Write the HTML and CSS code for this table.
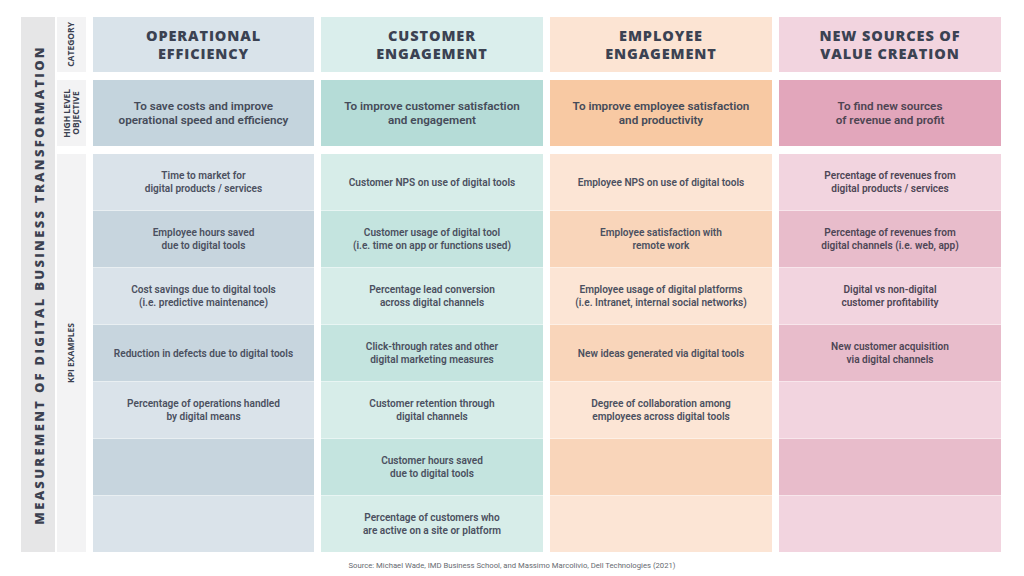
FILE: index.html
```html
<!DOCTYPE html>
<html>
<head>
<meta charset="utf-8">
<link rel="stylesheet" href="styles.css">
</head>
<body>
<div class="page">
  <div class="board">
    <div class="side"><span class="side-text">MEASUREMENT OF DIGITAL BUSINESS TRANSFORMATION</span></div>
    <div class="grid">
      <div class="lbl lbl-cat"><span class="vt">CATEGORY</span></div>
      <div class="cat c1"><h2>OPERATIONAL<br>EFFICIENCY</h2></div>
      <div class="cat c2"><h2>CUSTOMER<br>ENGAGEMENT</h2></div>
      <div class="cat c3"><h2>EMPLOYEE<br>ENGAGEMENT</h2></div>
      <div class="cat c4"><h2>NEW SOURCES OF<br>VALUE CREATION</h2></div>

      <div class="lbl lbl-obj"><span class="vt">HIGH LEVEL<br>OBJECTIVE</span></div>
      <div class="obj c1">To save costs and improve<br>operational speed and efficiency</div>
      <div class="obj c2">To improve customer satisfaction<br>and engagement</div>
      <div class="obj c3">To improve employee satisfaction<br>and productivity</div>
      <div class="obj c4">To find new sources<br>of revenue and profit</div>

      <div class="lbl lbl-kpi"><span class="vt">KPI EXAMPLES</span></div>
      <div class="kpis c1">
        <div class="kpi">Time to market for<br>digital products / services</div>
        <div class="kpi">Employee hours saved<br>due to digital tools</div>
        <div class="kpi">Cost savings due to digital tools<br>(i.e. predictive maintenance)</div>
        <div class="kpi">Reduction in defects due to digital tools</div>
        <div class="kpi">Percentage of operations handled<br>by digital means</div>
        <div class="kpi"></div>
        <div class="kpi"></div>
      </div>
      <div class="kpis c2">
        <div class="kpi">Customer NPS on use of digital tools</div>
        <div class="kpi">Customer usage of digital tool<br>(i.e. time on app or functions used)</div>
        <div class="kpi">Percentage lead conversion<br>across digital channels</div>
        <div class="kpi">Click-through rates and other<br>digital marketing measures</div>
        <div class="kpi">Customer retention through<br>digital channels</div>
        <div class="kpi">Customer hours saved<br>due to digital tools</div>
        <div class="kpi">Percentage of customers who<br>are active on a site or platform</div>
      </div>
      <div class="kpis c3">
        <div class="kpi">Employee NPS on use of digital tools</div>
        <div class="kpi">Employee satisfaction with<br>remote work</div>
        <div class="kpi">Employee usage of digital platforms<br>(i.e. Intranet, internal social networks)</div>
        <div class="kpi">New ideas generated via digital tools</div>
        <div class="kpi">Degree of collaboration among<br>employees across digital tools</div>
        <div class="kpi"></div>
        <div class="kpi"></div>
      </div>
      <div class="kpis c4">
        <div class="kpi">Percentage of revenues from<br>digital products / services</div>
        <div class="kpi">Percentage of revenues from<br>digital channels (i.e. web, app)</div>
        <div class="kpi">Digital vs non-digital<br>customer profitability</div>
        <div class="kpi">New customer acquisition<br>via digital channels</div>
        <div class="kpi"></div>
        <div class="kpi"></div>
        <div class="kpi"></div>
      </div>
    </div>
  </div>
  <p class="source">Source: Michael Wade, IMD Business School, and Massimo Marcolivio, Dell Technologies (2021)</p>
</div>
</body>
</html>
```

FILE: styles.css
```css
html, body {
  margin: 0;
  padding: 0;
  background: #ffffff;
}

.page {
  width: 1024px;
  height: 576px;
  padding: 17px 0 0 21px;
  box-sizing: border-box;
  font-family: Roboto, "Liberation Sans", sans-serif;
}

.board {
  display: flex;
  gap: 2px;
  height: 535px;
}

.side {
  width: 34px;
  background: #e6e6e7;
  display: flex;
  align-items: center;
  justify-content: center;
}

.side-text,
.vt {
  writing-mode: vertical-rl;
  transform: rotate(180deg);
  white-space: nowrap;
}

.side-text {
  font-family: "Open Sans", sans-serif;
  font-weight: 800;
  font-size: 13px;
  letter-spacing: 2.3px;
  color: #3b4150;
  margin-left: 2px;
}

.grid {
  display: grid;
  grid-template-columns: 29px 221px 222px 222px 222px;
  grid-template-rows: 55px 66px 398px;
  column-gap: 7px;
  row-gap: 8px;
}

.lbl {
  background: #f3f3f4;
  display: flex;
  align-items: center;
  justify-content: center;
}

.vt {
  font-family: "Open Sans", sans-serif;
  font-weight: 700;
  font-size: 8.5px;
  line-height: 8.5px;
  color: #3b4150;
  text-align: center;
}

.cat {
  display: flex;
  align-items: center;
  justify-content: center;
}

.cat h2 {
  margin: 0;
  font-family: "Open Sans", sans-serif;
  font-weight: 800;
  font-size: 14.5px;
  line-height: 18px;
  letter-spacing: 0.9px;
  text-align: center;
  color: #3b4252;
}

.obj {
  display: flex;
  align-items: center;
  justify-content: center;
  text-align: center;
  font-weight: 600;
  font-size: 11.7px;
  line-height: 14px;
  color: #454b59;
}

.kpis {
  display: grid;
  grid-template-rows: repeat(7, 1fr);
  row-gap: 1px;
}

.kpi {
  display: flex;
  align-items: center;
  justify-content: center;
  text-align: center;
  font-weight: 600;
  font-size: 10.1px;
  line-height: 13px;
  color: #4b5060;
}

/* Operational efficiency */
.cat.c1 { background: #d9e3ea; }
.obj.c1 { background: #c4d4dd; }
.kpis.c1 { background: #e9eff2; }
.kpis.c1 .kpi:nth-child(odd) { background: #dae3ea; }
.kpis.c1 .kpi:nth-child(even) { background: #c7d5de; }

/* Customer engagement */
.cat.c2 { background: #daeeec; }
.obj.c2 { background: #b5dcd7; }
.kpis.c2 { background: #e8f5f3; }
.kpis.c2 .kpi:nth-child(odd) { background: #d7ede9; }
.kpis.c2 .kpi:nth-child(even) { background: #c4e4df; }

/* Employee engagement */
.cat.c3 { background: #fce4d3; }
.obj.c3 { background: #f8c9a3; }
.kpis.c3 { background: #fdf0e6; }
.kpis.c3 .kpi:nth-child(odd) { background: #fce5d5; }
.kpis.c3 .kpi:nth-child(even) { background: #f9d5ba; }

/* New sources of value creation */
.cat.c4 { background: #f2d4df; }
.obj.c4 { background: #e2a6bb; color: #4e4452; }
.kpis.c4 { background: #f8e6ec; }
.kpis.c4 .kpi:nth-child(odd) { background: #f2d4df; }
.kpis.c4 .kpi:nth-child(even) { background: #e8bccb; }
.kpis.c4 .kpi { color: #4e4655; }

.source {
  margin: 9px 0 0 -21px;
  text-align: center;
  font-size: 7.7px;
  color: #666a70;
}
```
